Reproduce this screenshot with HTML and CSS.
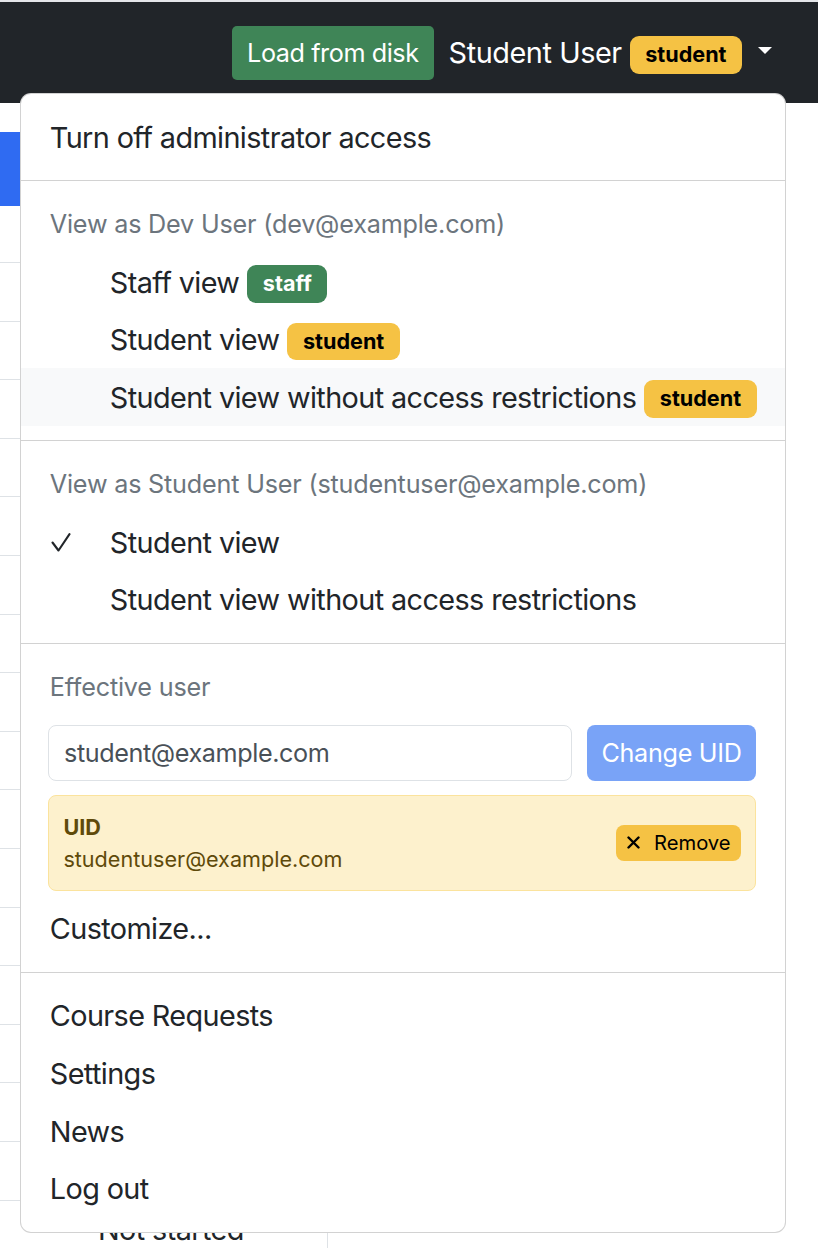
FILE: index.html
```html
<!DOCTYPE html>
<html lang="en">
<head>
<meta charset="utf-8">
<title>User menu</title>
<link rel="stylesheet" href="styles.css">
</head>
<body>
<div class="page">
  <nav class="navbar">
    <button class="btn btn-load" type="button">Load from disk</button>
    <div class="user-toggle">
      <span class="user-name">Student User</span>
      <span class="badge badge-student">student</span>
      <span class="caret"></span>
    </div>
  </nav>

  <main class="content">
    <div class="card">
      <div class="card-header"></div>
      <div class="table">
        <div class="trow trow-head"></div>
        <div class="trow"></div>
        <div class="trow"></div>
        <div class="trow"></div>
        <div class="trow"></div>
        <div class="trow"></div>
        <div class="trow"></div>
        <div class="trow"></div>
        <div class="trow"></div>
        <div class="trow"></div>
        <div class="trow"></div>
        <div class="trow"></div>
        <div class="trow"></div>
        <div class="trow"></div>
        <div class="trow"></div>
        <div class="trow"></div>
        <div class="trow"></div>
        <div class="trow trow-last">
          <div class="tcell tcell-status">Not started</div>
          <div class="tcell"></div>
        </div>
      </div>
    </div>
  </main>

  <div class="dropdown">
    <a class="item">Turn off administrator access</a>
    <div class="divider"></div>

    <div class="header">View as Dev User (dev@example.com)</div>
    <a class="item"><span class="check"></span>Staff view <span class="badge badge-staff">staff</span></a>
    <a class="item"><span class="check"></span>Student view <span class="badge badge-student">student</span></a>
    <a class="item item-active"><span class="check"></span>Student view without access restrictions <span class="badge badge-student">student</span></a>
    <div class="divider"></div>

    <div class="header">View as Student User (studentuser@example.com)</div>
    <a class="item"><span class="check"><svg class="check-icon" width="20" height="19" viewBox="0 0 20 19"><path d="M1.5 9.5 L7.5 17.5 L18.5 1.2" fill="none" stroke="#212529" stroke-width="2.1" stroke-linecap="round" stroke-linejoin="round"/></svg></span>Student view</a>
    <a class="item"><span class="check"></span>Student view without access restrictions</a>
    <div class="divider"></div>

    <div class="header">Effective user</div>
    <div class="uid-form">
      <div class="uid-row">
        <input class="uid-input" type="text" value="student@example.com">
        <button class="btn btn-change" type="button">Change UID</button>
      </div>
      <div class="alert">
        <div class="alert-text">
          <div class="alert-title">UID</div>
          <div class="alert-value">studentuser@example.com</div>
        </div>
        <button class="btn btn-remove" type="button"><svg class="x-icon" width="13" height="13" viewBox="0 0 13 13"><path d="M1.5 1.5 L11.5 11.5 M11.5 1.5 L1.5 11.5" stroke="#000" stroke-width="2.4" stroke-linecap="round"/></svg>Remove</button>
      </div>
    </div>
    <a class="item item-customize">Customize...</a>
    <div class="divider"></div>

    <a class="item">Course Requests</a>
    <a class="item">Settings</a>
    <a class="item">News</a>
    <a class="item">Log out</a>
  </div>
</div>
</body>
</html>
```

FILE: styles.css
```css
* {
  box-sizing: border-box;
}

html, body {
  margin: 0;
  padding: 0;
  background: #ffffff;
}

body {
  font-family: "Inter", "Noto Sans", sans-serif;
  font-size: 28.8px;
  color: #212529;
}

.page {
  position: relative;
  width: 818px;
  height: 1248px;
  overflow: hidden;
}

/* ---------- navbar ---------- */
.navbar {
  height: 103px;
  border-top: 2px solid #e4e6e9;
  background: #212529;
  display: flex;
  align-items: center;
  justify-content: flex-end;
  padding-right: 46px;
}

.btn {
  font-family: inherit;
  border: none;
  cursor: pointer;
}

.btn-load {
  height: 54px;
  padding: 0 15px;
  margin-right: 15px;
  background: #3f8557;
  color: #ffffff;
  font-size: 25.2px;
  letter-spacing: -0.43px;
  border-radius: 5px;
  margin-top: 1px;
}

.user-toggle {
  display: flex;
  align-items: center;
  color: #ffffff;
}

.user-name {
  font-size: 28.8px;
  letter-spacing: -0.42px;
}

.user-toggle .badge {
  margin-top: 5px;
}

.caret {
  width: 0;
  height: 0;
  border-top: 7.5px solid #ffffff;
  border-left: 7.5px solid transparent;
  border-right: 7.5px solid transparent;
  margin-left: 16px;
  margin-bottom: 4px;
}

/* ---------- badges ---------- */
.badge {
  display: inline-block;
  font-size: 21.6px;
  font-weight: 700;
  line-height: 1;
  letter-spacing: 0;
  padding: 8px 15.5px;
  border-radius: 9px;
  margin-left: 8px;
}

.badge-student {
  background: #f5c244;
  color: #000000;
}

.badge-staff {
  background: #3f8557;
  color: #ffffff;
}

/* ---------- background content ---------- */
.content {
  width: 770px;
}

.card {
  margin-top: 29px;
}

.card-header {
  height: 74px;
  background: #2f6bf2;
}

.trow {
  height: 58.6px;
  border-bottom: 1px solid #dee2e6;
  display: flex;
}

.trow-head {
  height: 57px;
}

.trow-last {
  border-bottom: none;
}

.tcell {
  line-height: 58px;
}

.tcell-status {
  width: 328px;
  padding-left: 98px;
  border-right: 1px solid #dee2e6;
  color: #212529;
  letter-spacing: -0.6px;
}

/* ---------- dropdown ---------- */
.dropdown {
  position: absolute;
  top: 93px;
  left: 20px;
  width: 766px;
  background: #ffffff;
  border: 1px solid rgba(0, 0, 0, 0.175);
  border-radius: 11px;
  padding: 14.4px 0;
}

.item,
.header {
  display: flex;
  align-items: center;
  padding: 7.2px 28.8px;
  line-height: 43.2px;
  white-space: nowrap;
}

.item {
  color: #212529;
  font-size: 28.8px;
  letter-spacing: -0.6px;
}

.item .badge {
  margin-left: 8px;
  margin-top: 4px;
}

.item-active {
  background: #f8f9fa;
}

.header {
  color: #6c757d;
  font-size: 25.2px;
  letter-spacing: -0.2px;
}

.check {
  width: 60px;
  flex: none;
  display: flex;
  align-items: center;
}

.check-icon {
  margin-left: 1px;
}

.divider {
  height: 0;
  border-top: 1px solid rgba(0, 0, 0, 0.175);
  margin: 14.4px 0;
}

.uid-form {
  padding: 9px 29px 0 27px;
}

.uid-row {
  display: flex;
  gap: 15px;
}

.uid-input {
  flex: 1;
  min-width: 0;
  height: 56px;
  border: 1px solid #dee2e6;
  border-radius: 8px;
  padding: 0 15px;
  font-family: inherit;
  font-size: 25.2px;
  letter-spacing: -0.4px;
  color: #495057;
  background: #ffffff;
  outline: none;
}

.btn-change {
  width: 169px;
  height: 56px;
  background: #79a3f7;
  color: #ffffff;
  font-size: 25.2px;
  letter-spacing: -0.3px;
  border-radius: 8px;
  padding: 0;
}

.alert {
  margin-top: 14px;
  height: 96px;
  display: flex;
  align-items: center;
  justify-content: space-between;
  padding: 0 14.4px;
  background: #fdf1cd;
  border: 1px solid #fbe39d;
  border-radius: 8px;
  color: #5f4a0a;
}

.alert-text {
  font-size: 21.6px;
  line-height: 32.4px;
}

.alert-title {
  font-weight: 700;
}

.btn-remove {
  height: 36px;
  display: flex;
  align-items: center;
  gap: 14px;
  padding: 0 10px 0 11px;
  background: #f5c244;
  color: #000000;
  font-size: 20.2px;
  border-radius: 8px;
}

.item-customize {
  margin-top: 9px;
}
```
